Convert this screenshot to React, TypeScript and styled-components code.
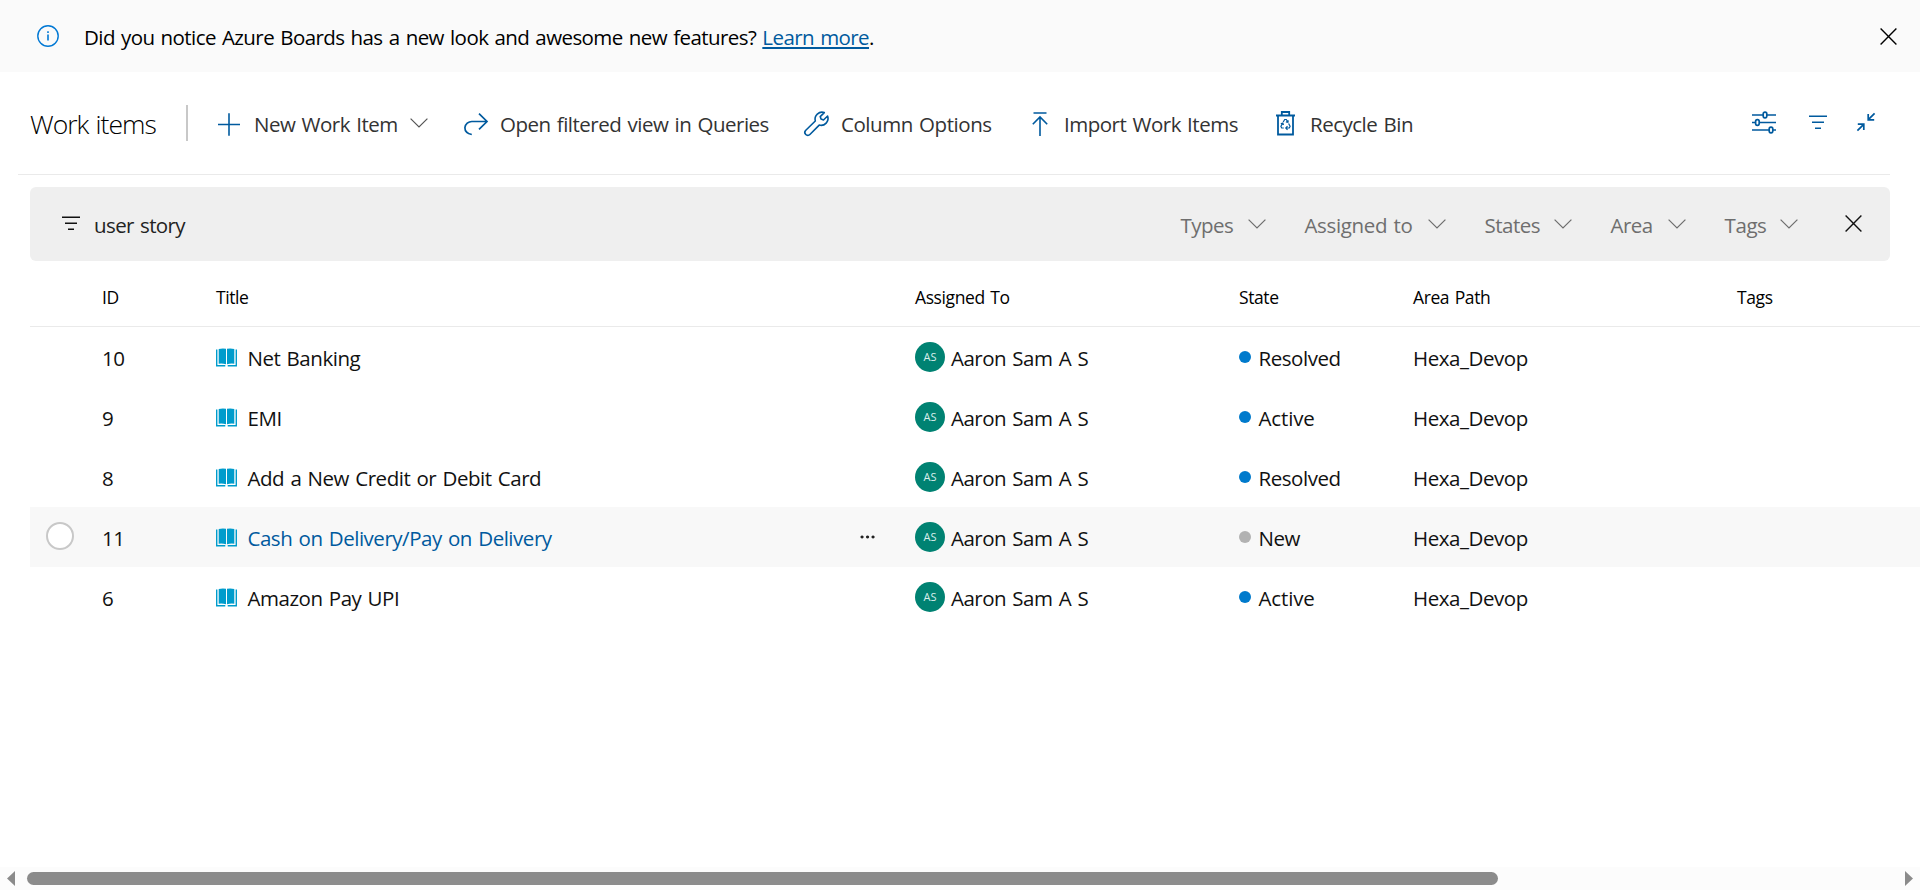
import React from "react";
import styled, { createGlobalStyle } from "styled-components";

const Global = createGlobalStyle`
  * { box-sizing: border-box; }
  body { margin: 0; background: #fff; overflow: hidden; }
`;

const Page = styled.div`
  display: flex;
  flex-direction: column;
  height: 890px;
  font-family: "Open Sans", "Noto Sans", sans-serif;
  font-size: 20.5px;
  color: #111;
  white-space: nowrap;
`;

const Label = styled.span<{ $ls?: number }>`
  letter-spacing: ${(p) => p.$ls ?? -0.5}px;
  word-spacing: 1.4px;
`;

const Glyph = styled.svg`
  display: block;
  flex: none;
  fill: none;
  stroke: currentColor;
  overflow: visible;
`;

const Banner = styled.header`
  display: flex;
  align-items: center;
  height: 72px;
  padding: 0 23px 0 37px;
  background: #fafafa;
  color: #000;
`;

const BannerIcon = styled.span`
  margin-right: 25px;
  color: #0078d4;
`;

const BannerText = styled.p`
  flex: 1;
  margin: 0;
  padding-top: 2px;
  line-height: 28px;
`;

const Link = styled.a`
  color: #005a9e;
  text-decoration: underline;
  text-decoration-thickness: 2px;
  text-underline-offset: 2px;
`;

const Toolbar = styled.div`
  display: flex;
  align-items: center;
  height: 103px;
  margin: 0 30px 0 18px;
  padding: 2px 14px 0 12px;
  border-bottom: 1px solid #eaeaea;
  color: #333;
`;

const PageTitle = styled.h1`
  width: 156px;
  margin: 0;
  font-size: 26.5px;
  font-weight: 300;
  line-height: 36px;
  color: #000;
`;

const Divider = styled.span`
  width: 2px;
  height: 36px;
  margin: 0 30px 2px 0;
  background: #c8c8c8;
`;

const Command = styled.button<{ $w: number; $gap: number }>`
  display: flex;
  align-items: center;
  flex: none;
  width: ${(p) => p.$w}px;
  gap: ${(p) => p.$gap}px;
  padding: 0;
  border: 0;
  background: none;
  font: inherit;
  line-height: 28px;
  color: inherit;
  text-align: left;

  > svg:first-child { color: #005a9e; }
  > svg:last-child { margin: 0 0 2px -2px; color: #555; }
  > svg:only-of-type { margin: 0 0 1px; }
`;

const ViewTools = styled.div`
  display: flex;
  align-items: center;
  margin: 0 1px 4px auto;
  color: #005a9e;
`;

const ViewTool = styled.span<{ $ml?: number }>`
  margin-left: ${(p) => p.$ml ?? 0}px;
`;

const FilterBar = styled.div`
  display: flex;
  align-items: center;
  height: 74px;
  margin: 12px 30px 0;
  padding: 0 28.5px 1px 31.5px;
  border-radius: 6px;
  background: #efefef;

  > svg { color: #111; }
`;

const Query = styled.span`
  flex: 1;
  margin-left: 14.5px;
  padding-top: 3px;
  color: #222;
`;

const Facets = styled.div`
  display: flex;
  gap: 39px;
  margin-right: 47px;
`;

const Facet = styled.span<{ $w: number }>`
  display: flex;
  align-items: center;
  justify-content: space-between;
  width: ${(p) => p.$w}px;
  padding-top: 2px;
  color: #6e6e6e;

  svg { margin-bottom: 1px; }
`;

const columns = "72px 114px 699px 324px 174px 324px 1fr";

const HeadRow = styled.div`
  display: grid;
  grid-template-columns: ${columns};
  align-items: center;
  height: 66px;
  margin-left: 30px;
  padding-top: 6px;
  border-bottom: 1px solid #eaeaea;
  font-size: 17.5px;
  color: #000;
`;

const Row = styled.div<{ $active?: boolean }>`
  display: grid;
  grid-template-columns: ${columns};
  align-items: center;
  height: 60px;
  margin-left: 30px;
  background: ${(p) => (p.$active ? "#f8f8f8" : "transparent")};
`;

const Cell = styled.div`
  display: flex;
  align-items: center;
  line-height: 28px;
`;

const CellText = styled(Label)<{ $link?: boolean }>`
  padding-top: 2px;
  color: ${(p) => (p.$link ? "#005a9e" : "inherit")};
`;

const Radio = styled.span`
  width: 28px;
  height: 28px;
  margin: 0 0 2px 16px;
  border: 2px solid #c8c8c8;
  border-radius: 50%;
  background: #fff;
`;

const BookSlot = styled.span`
  margin: 0 10.5px 0 0;
`;

const More = styled.span`
  margin: 0 40px 1px auto;
`;

const Avatar = styled.span`
  display: flex;
  align-items: center;
  justify-content: center;
  width: 30px;
  height: 30px;
  margin-right: 6px;
  border-radius: 50%;
  background: #008272;
  color: #d9eeeb;
  font-size: 11px;
`;

const Dot = styled.span<{ $color: string }>`
  width: 12px;
  height: 12px;
  margin-right: 7.5px;
  border-radius: 50%;
  background: ${(p) => p.$color};
`;

const Scrollbar = styled.div`
  display: flex;
  align-items: center;
  height: 23px;
  margin-top: auto;
  padding: 0 7px;
  background: #fcfcfc;
  color: #8b8b8b;
`;

const Thumb = styled.span`
  width: 1471px;
  height: 13px;
  margin: 0 auto 0 12px;
  border-radius: 7px;
  background: #8b8b8b;
`;

const Chevron = () => (
  <Glyph width="18" height="10" viewBox="0 0 18 10" strokeWidth="1.2">
    <path d="M.6.6 9 9 17.4.6" />
  </Glyph>
);

const Cross = () => (
  <Glyph width="17" height="17" viewBox="0 0 17 17" strokeWidth="1.4">
    <path d="M.6.6l15.8 15.8M16.4.6.6 16.4" />
  </Glyph>
);

const FilterLines = () => (
  <Glyph width="18" height="15" viewBox="0 0 18 15" strokeWidth="1.5">
    <path d="M0 1.2h18M3 7.2h12M6 13.2h6" />
  </Glyph>
);

const InfoGlyph = () => (
  <Glyph width="22" height="22" viewBox="0 0 22 22" strokeWidth="1.4">
    <circle cx="11" cy="11" r="10.2" />
    <path d="M11 9.5v6M11 6.2v1.8" strokeWidth="1.6" />
  </Glyph>
);

const PlusGlyph = () => (
  <Glyph width="22" height="23" viewBox="0 0 22 23" strokeWidth="1.6">
    <path d="M0 11.5h22M11 .3v22.4" />
  </Glyph>
);

const RedoGlyph = () => (
  <Glyph width="24" height="22" viewBox="0 0 24 22" strokeWidth="1.7">
    <path d="M15 .7l8 7.8-8 7.8M23 8.500H8A7 7 0 0 0 .9 14.700c0 3 2.400 5.900 6.900 6.800" />
  </Glyph>
);

const WrenchGlyph = () => (
  <Glyph width="25" height="25" viewBox="0 0 25 25" strokeWidth="1.6" strokeLinejoin="round">
    <path d="M20.300 1.600A7 7 0 0 0 11.300 10L1.800 19.300a2.900 2.900 0 0 0 4.100 4.200l9.300-9.400A7 7 0 0 0 23.600 5l-4.100 4-2.500-.9-.8-2.500z" />
  </Glyph>
);

const ImportGlyph = () => (
  <Glyph width="16" height="24" viewBox="0 0 16 24" strokeWidth="1.6">
    <path d="M1.500 1h13M8 24V5M.8 12.200 8 5l7.200 7.200" />
  </Glyph>
);

const BinGlyph = () => (
  <Glyph width="19" height="25" viewBox="0 0 19 25" strokeWidth="1.8">
    <path d="M0 4.500h19M2 4.500v19h15v-19M5.800 4.500V1h7.400v3.500" />
    <path d="M7.200 11 8.700 8.500h1.600l1.500 2.500M6.600 12.500l-1.700 2.800.8 1.700h2.100M12.600 12.500l1.500 2.800-.8 1.700H10M11.500 15.200 9.800 17l1.700 1.800M4.800 12.700l2-.6.7 1.900M12.300 9.300l-.4 2-2-.4" strokeWidth="1.200" />
  </Glyph>
);

const SlidersGlyph = () => (
  <Glyph width="24" height="23" viewBox="0 0 24 23" strokeWidth="1.7">
    <path d="M0 4h11M15 4h9M0 11.500h3.500M7.500 11.500H24M0 19h17M21 19h3" />
    <rect x="11.200" y="1.200" width="3.600" height="5.600" rx="1.700" />
    <rect x="3.600" y="8.700" width="3.600" height="5.600" rx="1.700" />
    <rect x="17.200" y="16.200" width="3.600" height="5.600" rx="1.700" />
  </Glyph>
);

const CollapseGlyph = () => (
  <Glyph width="18" height="18" viewBox="0 0 18 18" strokeWidth="1.7">
    <path d="M17.600.4 11.300 6.700M11.200.9v6h6M.4 17.600l6.300-6.300M.8 11.100h6v6" />
  </Glyph>
);

const BookGlyph = () => (
  <Glyph width="21" height="19" viewBox="0 0 21 19">
    <path d="M2.700 1Q6.500 0 10 .8v15.400Q6 15 2.700 15.700zM18.300 1Q14.500 0 11 .8v15.400q4-1.200 7.300-.5z" fill="#009ccc" stroke="none" />
    <path d="M.7 1.500v16.300h8.600M20.300 1.500v16.300h-8.600" stroke="#009ccc" strokeWidth="1.400" />
  </Glyph>
);

const DotsGlyph = () => (
  <Glyph width="15" height="4" viewBox="0 0 15 4">
    <path d="M2 .4a1.600 1.600 0 1 0 .1 0zM7.500.4a1.600 1.600 0 1 0 .1 0zM13 .4a1.600 1.600 0 1 0 .1 0z" fill="#222" stroke="none" />
  </Glyph>
);

const facets = [
  { name: "Types", w: 85 },
  { name: "Assigned to", w: 141, ls: -0.35 },
  { name: "States", w: 87 },
  { name: "Area", w: 75 },
  { name: "Tags", w: 73, ls: -0.4 },
];

const headings = ["ID", "Title", "Assigned To", "State", "Area Path", "Tags"];

const items = [
  { id: 10, title: "Net Banking", state: "Resolved" },
  { id: 9, title: "EMI", state: "Active" },
  { id: 8, title: "Add a New Credit or Debit Card", state: "Resolved" },
  { id: 11, title: "Cash on Delivery/Pay on Delivery", state: "New", hovered: true },
  { id: 6, title: "Amazon Pay UPI", state: "Active" },
];

export default function App() {
  return (
    <Page>
      <Global />
      <Banner>
        <BannerIcon><InfoGlyph /></BannerIcon>
        <BannerText>
          <Label $ls={-0.58}>
            Did you notice Azure Boards has a new look and awesome new features? <Link>Learn more</Link>.
          </Label>
        </BannerText>
        <Cross />
      </Banner>

      <Toolbar>
        <PageTitle><Label $ls={-1}>Work items</Label></PageTitle>
        <Divider />
        <Command $w={246} $gap={14}><PlusGlyph /><Label>New Work Item</Label><Chevron /></Command>
        <Command $w={340} $gap={12}><RedoGlyph /><Label>Open filtered view in Queries</Label></Command>
        <Command $w={228} $gap={12}><WrenchGlyph /><Label $ls={-0.45}>Column Options</Label></Command>
        <Command $w={244} $gap={16}><ImportGlyph /><Label>Import Work Items</Label></Command>
        <Command $w={140} $gap={15}><BinGlyph /><Label>Recycle Bin</Label></Command>
        <ViewTools>
          <ViewTool><SlidersGlyph /></ViewTool>
          <ViewTool $ml={33}><FilterLines /></ViewTool>
          <ViewTool $ml={30}><CollapseGlyph /></ViewTool>
        </ViewTools>
      </Toolbar>

      <FilterBar>
        <FilterLines />
        <Query><Label $ls={-0.6}>user story</Label></Query>
        <Facets>
          {facets.map((f) => (
            <Facet key={f.name} $w={f.w}><Label $ls={f.ls}>{f.name}</Label><Chevron /></Facet>
          ))}
        </Facets>
        <Cross />
      </FilterBar>

      <HeadRow>
        <span />
        {headings.map((h) => (
          <Label key={h} $ls={-0.4}>{h}</Label>
        ))}
      </HeadRow>
      {items.map((it) => (
        <Row key={it.id} $active={it.hovered}>
          <Cell>{it.hovered && <Radio />}</Cell>
          <Cell><CellText>{it.id}</CellText></Cell>
          <Cell>
            <BookSlot><BookGlyph /></BookSlot>
            <CellText $link={it.hovered} $ls={-0.47}>{it.title}</CellText>
            {it.hovered && <More><DotsGlyph /></More>}
          </Cell>
          <Cell><Avatar>AS</Avatar><CellText>Aaron Sam A S</CellText></Cell>
          <Cell>
            <Dot $color={it.state === "New" ? "#b2b2b2" : "#007acc"} />
            <CellText $ls={it.state === "Active" ? -0.15 : -0.45}>{it.state}</CellText>
          </Cell>
          <Cell><CellText $ls={-0.45}>Hexa_Devop</CellText></Cell>
        </Row>
      ))}

      <Scrollbar>
        <Glyph width="8" height="15" viewBox="0 0 8 15"><path d="M8 0v15L0 7.500z" fill="currentColor" stroke="none" /></Glyph>
        <Thumb />
        <Glyph width="8" height="15" viewBox="0 0 8 15"><path d="M0 0v15l8-7.500z" fill="currentColor" stroke="none" /></Glyph>
      </Scrollbar>
    </Page>
  );
}
